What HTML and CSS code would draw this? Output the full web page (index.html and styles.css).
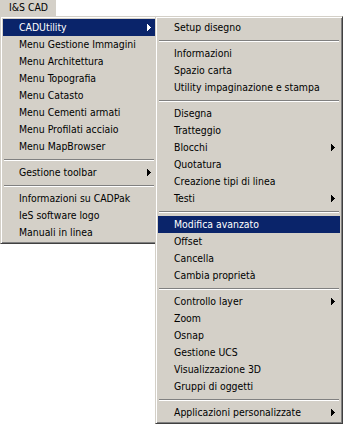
FILE: index.html
```html
<!DOCTYPE html>
<html lang="it">
<head>
<meta charset="utf-8">
<title>I&amp;S CAD</title>
<link rel="stylesheet" href="styles.css">
</head>
<body>
<div class="menubar">
  <div class="menubar-item">I&amp;S CAD</div>
</div>
<div class="menus">
  <div class="menu menu-main">
    <div class="item active"><span class="label">CADUtility</span><svg class="arrow" width="4" height="7" viewBox="0 0 4 7"><path d="M0 0h1v7h-1z M1 1h1v5h-1z M2 2h1v3h-1z M3 3h1v1h-1z"/></svg></div>
    <div class="item"><span class="label">Menu Gestione Immagini</span></div>
    <div class="item"><span class="label">Menu Architettura</span></div>
    <div class="item"><span class="label">Menu Topografia</span></div>
    <div class="item"><span class="label">Menu Catasto</span></div>
    <div class="item"><span class="label">Menu Cementi armati</span></div>
    <div class="item"><span class="label">Menu Profilati acciaio</span></div>
    <div class="item"><span class="label">Menu MapBrowser</span></div>
    <div class="sep"></div>
    <div class="item"><span class="label">Gestione toolbar</span><svg class="arrow" width="4" height="7" viewBox="0 0 4 7"><path d="M0 0h1v7h-1z M1 1h1v5h-1z M2 2h1v3h-1z M3 3h1v1h-1z"/></svg></div>
    <div class="sep"></div>
    <div class="item"><span class="label">Informazioni su CADPak</span></div>
    <div class="item"><span class="label">IeS software logo</span></div>
    <div class="item"><span class="label">Manuali in linea</span></div>
  </div>
  <div class="menu menu-sub">
    <div class="item"><span class="label">Setup disegno</span></div>
    <div class="sep"></div>
    <div class="item"><span class="label">Informazioni</span></div>
    <div class="item"><span class="label">Spazio carta</span></div>
    <div class="item"><span class="label">Utility impaginazione e stampa</span></div>
    <div class="sep"></div>
    <div class="item"><span class="label">Disegna</span></div>
    <div class="item"><span class="label">Tratteggio</span></div>
    <div class="item"><span class="label">Blocchi</span><svg class="arrow" width="4" height="7" viewBox="0 0 4 7"><path d="M0 0h1v7h-1z M1 1h1v5h-1z M2 2h1v3h-1z M3 3h1v1h-1z"/></svg></div>
    <div class="item"><span class="label">Quotatura</span></div>
    <div class="item"><span class="label">Creazione tipi di linea</span></div>
    <div class="item"><span class="label">Testi</span><svg class="arrow" width="4" height="7" viewBox="0 0 4 7"><path d="M0 0h1v7h-1z M1 1h1v5h-1z M2 2h1v3h-1z M3 3h1v1h-1z"/></svg></div>
    <div class="sep"></div>
    <div class="item active"><span class="label">Modifica avanzato</span></div>
    <div class="item"><span class="label">Offset</span></div>
    <div class="item"><span class="label">Cancella</span></div>
    <div class="item"><span class="label">Cambia proprietà</span></div>
    <div class="sep"></div>
    <div class="item"><span class="label">Controllo layer</span><svg class="arrow" width="4" height="7" viewBox="0 0 4 7"><path d="M0 0h1v7h-1z M1 1h1v5h-1z M2 2h1v3h-1z M3 3h1v1h-1z"/></svg></div>
    <div class="item"><span class="label">Zoom</span></div>
    <div class="item"><span class="label">Osnap</span></div>
    <div class="item"><span class="label">Gestione UCS</span></div>
    <div class="item"><span class="label">Visualizzazione 3D</span></div>
    <div class="item"><span class="label">Gruppi di oggetti</span></div>
    <div class="sep"></div>
    <div class="item"><span class="label">Applicazioni personalizzate</span><svg class="arrow" width="4" height="7" viewBox="0 0 4 7"><path d="M0 0h1v7h-1z M1 1h1v5h-1z M2 2h1v3h-1z M3 3h1v1h-1z"/></svg></div>
  </div>
</div>
</body>
</html>
```

FILE: styles.css
```css
html, body {
  margin: 0;
  padding: 0;
  background: #ffffff;
}

body {
  font-family: "DejaVu Sans Condensed", "DejaVu Sans", sans-serif;
  font-stretch: condensed;
  font-size: 10.4px;
  color: #000000;
  -webkit-font-smoothing: none;
}

.menubar {
  display: flex;
  height: 16px;
}

.menubar-item {
  box-sizing: border-box;
  width: 56px;
  height: 16px;
  line-height: 15px;
  padding-left: 9px;
  background: #d4d0c8;
  white-space: nowrap;
}

.menus {
  display: flex;
  align-items: flex-start;
}

.menu {
  box-sizing: border-box;
  background: #d4d0c8;
  border-top: 1px solid #d4d0c8;
  border-left: 1px solid #d4d0c8;
  border-right: 1px solid #404040;
  border-bottom: 1px solid #404040;
  box-shadow: inset 1px 1px 0 #ffffff, inset -1px -1px 0 #808080;
  padding: 2px;
  display: flex;
  flex-direction: column;
}

.menu-main {
  width: 158px;
}

.menu-sub {
  width: 188px;
  margin-left: -3px;
  position: relative;
}

.item {
  display: flex;
  align-items: center;
  height: 17px;
  padding-left: 16px;
  padding-right: 4px;
  white-space: nowrap;
}

.menu-sub .item {
  padding-right: 5px;
}

.item .label {
  flex: 1;
  line-height: 17px;
}

.item.active {
  background: #0a246a;
  color: #ffffff;
}

.arrow {
  display: block;
  fill: currentColor;
  shape-rendering: crispEdges;
}

.sep {
  height: 2px;
  margin: 4px 1px 3px 1px;
  border-top: 1px solid #808080;
  border-bottom: 1px solid #ffffff;
  box-sizing: border-box;
}
```
